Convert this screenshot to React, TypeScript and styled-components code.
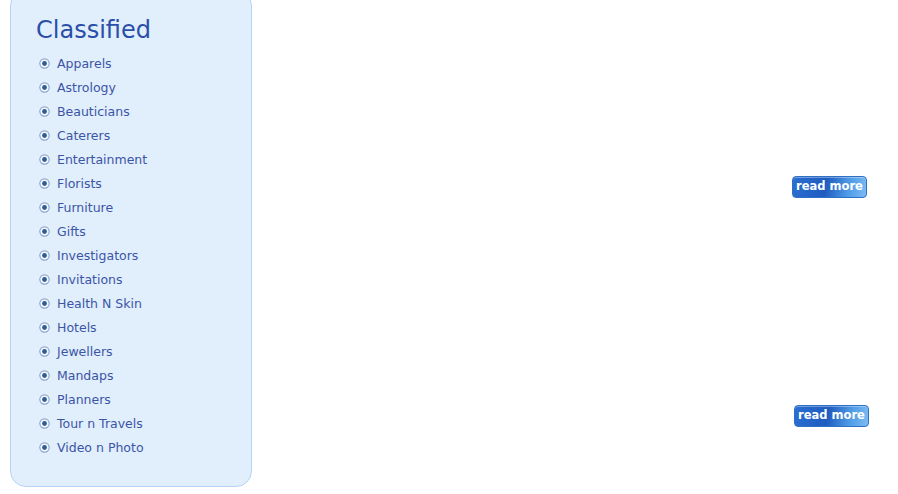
import styled, { createGlobalStyle } from "styled-components";

const categories = [
  "Apparels",
  "Astrology",
  "Beauticians",
  "Caterers",
  "Entertainment",
  "Florists",
  "Furniture",
  "Gifts",
  "Investigators",
  "Invitations",
  "Health N Skin",
  "Hotels",
  "Jewellers",
  "Mandaps",
  "Planners",
  "Tour n Travels",
  "Video n Photo",
];

const GlobalStyle = createGlobalStyle`
  body {
    margin: 0;
    background: #ffffff;
    font-family: "DejaVu Sans", Verdana, sans-serif;
    overflow: hidden;
  }
`;

const Bullet = () => (
  <svg width="11" height="11" viewBox="0 0 11 11">
    <circle cx="5.5" cy="5.5" r="5.2" fill="#8aa6cb" />
    <circle cx="5.5" cy="5.5" r="4.1" fill="#f4f8fd" />
    <circle cx="5.5" cy="5.5" r="2.4" fill="#2d5d96" />
  </svg>
);

export default function App() {
  return (
    <>
      <GlobalStyle />
      <Page>
        <Sidebar>
          <Title>Classified</Title>
          <List>
            {categories.map((item) => (
              <Item key={item}>
                <Bullet />
                <span>{item}</span>
              </Item>
            ))}
          </List>
        </Sidebar>
        <Main>
          <Section $height={229} $right={31}>
            <ReadMore>read more</ReadMore>
          </Section>
          <Section $height={80} $right={29}>
            <ReadMore>read more</ReadMore>
          </Section>
        </Main>
      </Page>
    </>
  );
}

const Page = styled.div`
  display: flex;
  width: 898px;
  height: 494px;
`;

const Sidebar = styled.div`
  box-sizing: border-box;
  width: 242px;
  height: 497px;
  margin: -10px 0 0 10px;
  padding: 24px 0 0 25px;
  background: #e1eefc;
  border: 1px solid #b6d4f4;
  border-radius: 16px;
`;

const Title = styled.h1`
  margin: 0 0 6px 0;
  font-family: "DejaVu Sans", Verdana, sans-serif;
  font-weight: normal;
  font-size: 24px;
  line-height: 30px;
  color: #2b4ea8;
`;

const List = styled.ul`
  margin: 0;
  padding: 0 0 0 3px;
  list-style: none;
`;

const Item = styled.li`
  display: flex;
  align-items: center;
  gap: 7px;
  height: 24px;
  font-size: 12.5px;
  color: #3b55a6;
  & svg {
    flex-shrink: 0;
    margin-top: 1px;
  }
`;

const Main = styled.div`
  flex: 1;
  display: flex;
  flex-direction: column;
  padding-top: 176px;
`;

const Section = styled.div<{ $height: number; $right: number }>`
  display: flex;
  justify-content: flex-end;
  height: ${(p) => p.$height}px;
  padding-right: ${(p) => p.$right}px;
`;

const ReadMore = styled.button`
  box-sizing: border-box;
  width: 75px;
  height: 22px;
  padding: 0 0 2px 0;
  border: 1px solid #2f6fc4;
  border-radius: 4px;
  background: linear-gradient(
    100deg,
    #2a6fd0 0%,
    #1f5cc0 45%,
    #4f9be6 75%,
    #7cbcf3 100%
  );
  box-shadow: inset 0 1px 0 rgba(255, 255, 255, 0.35);
  color: #ffffff;
  font-family: "DejaVu Sans", Verdana, sans-serif;
  font-weight: bold;
  font-size: 11.5px;
  cursor: pointer;
`;
